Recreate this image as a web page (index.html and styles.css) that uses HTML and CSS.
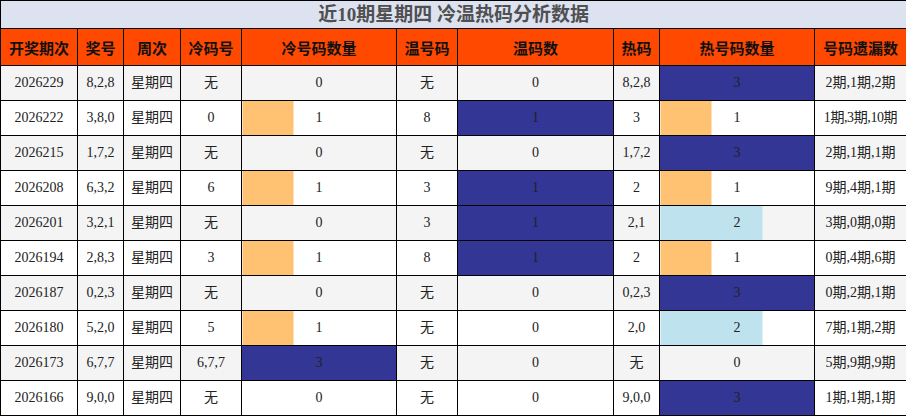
FILE: index.html
```html
<!DOCTYPE html>
<html lang="zh">
<head>
<meta charset="utf-8">
<title>近10期星期四 冷温热码分析数据</title>
<link rel="stylesheet" href="styles.css">
</head>
<body>
<table class="grid">
  <colgroup>
    <col class="w77"><col class="w46"><col class="w57"><col class="w61"><col class="w155">
    <col class="w61"><col class="w156"><col class="w46"><col class="w155"><col class="w92">
  </colgroup>
  <thead>
    <tr class="title"><th colspan="10">近10期星期四 冷温热码分析数据</th></tr>
    <tr class="head">
      <th>开奖期次</th><th>奖号</th><th>周次</th><th>冷码号</th><th>冷号码数量</th>
      <th>温号码</th><th>温码数</th><th>热码</th><th>热号码数量</th><th>号码遗漏数</th>
    </tr>
  </thead>
  <tbody>
    <tr class="alt"><td>2026229</td><td>8,2,8</td><td>星期四</td><td>无</td><td>0</td><td>无</td><td>0</td><td>8,2,8</td><td class="b3">3</td><td>2期,1期,2期</td></tr>
    <tr><td>2026222</td><td>3,8,0</td><td>星期四</td><td>0</td><td class="b1">1</td><td>8</td><td class="b3">1</td><td>3</td><td class="b1">1</td><td class="tight">1期,3期,10期</td></tr>
    <tr class="alt"><td>2026215</td><td>1,7,2</td><td>星期四</td><td>无</td><td>0</td><td>无</td><td>0</td><td>1,7,2</td><td class="b3">3</td><td>2期,1期,1期</td></tr>
    <tr><td>2026208</td><td>6,3,2</td><td>星期四</td><td>6</td><td class="b1">1</td><td>3</td><td class="b3">1</td><td>2</td><td class="b1">1</td><td>9期,4期,1期</td></tr>
    <tr class="alt"><td>2026201</td><td>3,2,1</td><td>星期四</td><td>无</td><td>0</td><td>3</td><td class="b3">1</td><td>2,1</td><td class="b2">2</td><td>3期,0期,0期</td></tr>
    <tr><td>2026194</td><td>2,8,3</td><td>星期四</td><td>3</td><td class="b1">1</td><td>8</td><td class="b3">1</td><td>2</td><td class="b1">1</td><td>0期,4期,6期</td></tr>
    <tr class="alt"><td>2026187</td><td>0,2,3</td><td>星期四</td><td>无</td><td>0</td><td>无</td><td>0</td><td>0,2,3</td><td class="b3">3</td><td>0期,2期,1期</td></tr>
    <tr><td>2026180</td><td>5,2,0</td><td>星期四</td><td>5</td><td class="b1">1</td><td>无</td><td>0</td><td>2,0</td><td class="b2">2</td><td>7期,1期,2期</td></tr>
    <tr class="alt"><td>2026173</td><td>6,7,7</td><td>星期四</td><td>6,7,7</td><td class="b3">3</td><td>无</td><td>0</td><td>无</td><td>0</td><td>5期,9期,9期</td></tr>
    <tr><td>2026166</td><td>9,0,0</td><td>星期四</td><td>无</td><td>0</td><td>无</td><td>0</td><td>9,0,0</td><td class="b3">3</td><td>1期,1期,1期</td></tr>
  </tbody>
</table>
</body>
</html>
```
FILE: styles.css
```css
html, body {
  margin: 0;
  padding: 0;
  background: #ffffff;
}
body {
  font-family: "Liberation Serif", "Noto Sans CJK SC", serif;
  color: #222;
}
.grid {
  width: 906px;
  border-collapse: collapse;
  table-layout: fixed;
  border: 1px solid #000;
}
.w77 { width: 77px; }
.w46 { width: 46px; }
.w57 { width: 57px; }
.w61 { width: 61px; }
.w155 { width: 155px; }
.w156 { width: 156px; }
.w92 { width: 92px; }

.grid th, .grid td {
  border: 1px solid #000;
  padding: 0;
  text-align: center;
  white-space: nowrap;
  overflow: hidden;
}
.title th {
  height: 27px;
  background: #dce2f0;
  color: #505050;
  font-size: 19px;
  font-weight: bold;
  line-height: 27px;
}
.head th {
  height: 36px;
  background: #ff4800;
  color: #111;
  font-size: 15px;
  font-weight: bold;
  font-family: "Noto Sans CJK SC", sans-serif;
}
.grid td {
  height: 34px;
  font-size: 14px;
  line-height: 16px;
}
.alt { background: #f4f4f4; }
.tight { letter-spacing: -0.4px; }

.b1 { background: linear-gradient(90deg, #ffc273 33%, transparent 33%); }
.b2 { background: linear-gradient(90deg, #bee3ee 66%, transparent 66%); }
.b3 { background: #333694; }
```
